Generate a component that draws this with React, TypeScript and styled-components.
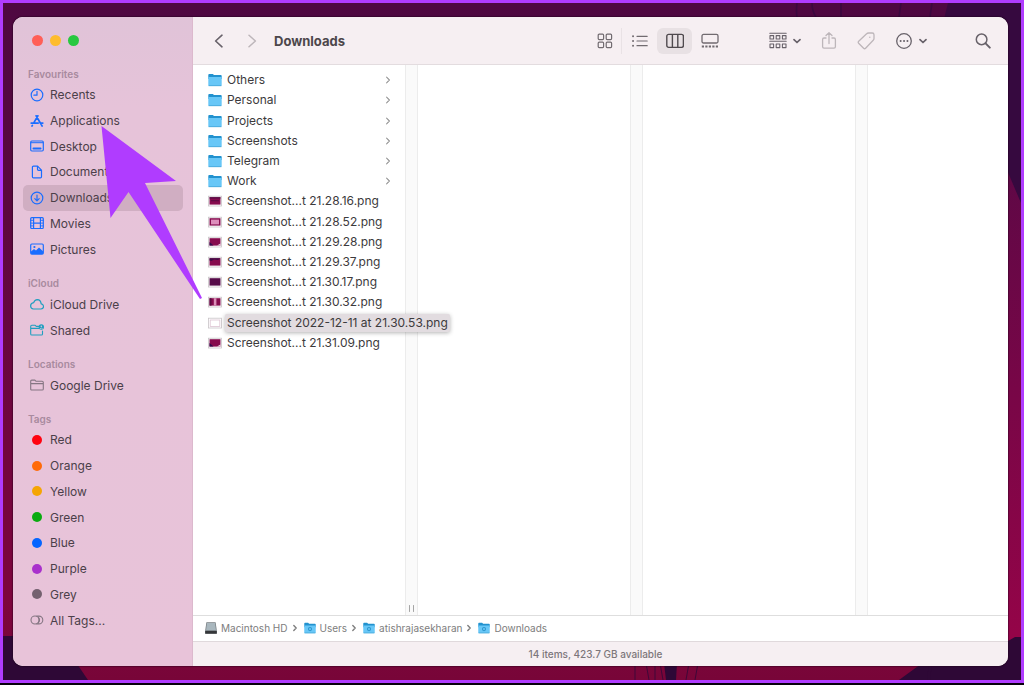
import React from "react";
import styled, { createGlobalStyle } from "styled-components";

const GlobalStyle = createGlobalStyle`
  *, *::before, *::after { box-sizing: border-box; }
  body {
    margin: 0;
    font-family: Inter, "Liberation Sans", sans-serif;
    font-size: 12px;
    color: #3c3a3c;
  }
  ul, ol { list-style: none; margin: 0; padding: 0; }
  a { color: inherit; text-decoration: none; }
  button { margin: 0; padding: 0; border: 0; background: none; color: inherit; font: inherit; }
  svg { display: block; flex: none; }
`;

const Screen = styled.div`
  display: flex;
  height: 100vh;
  min-height: 685px;
  padding-bottom: 2px;
  background: #07000d;
`;

const Desktop = styled.main`
  position: relative;
  display: flex;
  flex: 1;
  min-width: 0;
  padding: 14px 13px 14px 10px;
  border: 3px solid #b03cff;
  background: linear-gradient(180deg, #4e0841 0%, #5c083f 30%, #72063e 65%, #7e063e 88%, #780538 100%);
`;

const Wallpaper = styled.svg`
  position: absolute;
  inset: 0;
  width: 100%;
  height: 100%;
`;

const Window = styled.div`
  position: relative;
  display: flex;
  flex: 1;
  min-width: 0;
  border-radius: 10px;
  overflow: hidden;
  background: #fff;
  box-shadow: 0 0 1px 1px rgba(30, 0, 25, 0.4);
`;

const Sidebar = styled.nav`
  display: flex;
  flex-direction: column;
  flex: none;
  width: 180px;
  padding: 18px 9px 0 10px;
  border-right: 1px solid #dcb9cd;
  background: linear-gradient(180deg, #e0c3d8 0%, #e6c3d9 14%, #e8c3d9 100%);
`;

const Lights = styled.div`
  display: flex;
  gap: 7px;
  height: 31px;
  padding-left: 9px;
`;

const Light = styled.button<{ $color: string }>`
  width: 11px;
  height: 11px;
  border-radius: 50%;
  background: ${(p) => p.$color};
`;

const Section = styled.section`
  margin-bottom: 13px;
`;

const SectionTitle = styled.h2`
  margin: 0;
  padding-left: 5px;
  font-size: 10px;
  line-height: 16px;
  font-weight: 600;
  color: #a88a9e;
`;

const PlaceList = styled.ul<{ $height: number }>`
  display: grid;
  grid-auto-rows: 1fr;
  height: ${(p) => p.$height}px;
`;

const Place = styled.a<{ $active?: boolean; $tint: string }>`
  display: flex;
  align-items: center;
  gap: 6px;
  height: 100%;
  padding-left: 7px;
  border-radius: 5px;
  color: #4b4049;
  background: ${(p) => (p.$active ? "#d0aec2" : "transparent")};
  svg { color: ${(p) => p.$tint}; }
`;

const Dot = styled.span<{ $color: string }>`
  width: 10px;
  height: 10px;
  margin: 0 2px;
  border-radius: 50%;
  background: ${(p) => p.$color};
`;

const Content = styled.div`
  display: flex;
  flex-direction: column;
  flex: 1;
  min-width: 0;
`;

const Toolbar = styled.header`
  display: flex;
  align-items: center;
  flex: none;
  height: 48px;
  padding: 0 17px 0 17px;
  border-bottom: 1px solid #e3dcdf;
  background: #f6eff2;
  color: #68626a;
`;

const NavButtons = styled.div`
  display: flex;
  gap: 15px;
`;

const Title = styled.h1`
  flex: 1;
  margin: 0 0 0 13px;
  font-size: 13px;
  line-height: 20px;
  font-weight: 700;
  color: #4c474b;
`;

const ViewSwitch = styled.div`
  display: flex;
  margin-right: 42px;
`;

const ViewButton = styled.button<{ $active?: boolean; $divider?: boolean }>`
  display: grid;
  place-items: center;
  width: 35px;
  height: 26px;
  border-radius: ${(p) => (p.$divider ? 0 : 6)}px;
  box-shadow: ${(p) => (p.$divider ? "inset -1px 0 #e9e2e5" : "none")};
  background: ${(p) => (p.$active ? "#e8e1e4" : "transparent")};
  color: ${(p) => (p.$active ? "#4f4a4e" : "#716b70")};
`;

const Tools = styled.div`
  display: flex;
  align-items: center;
  gap: 20px;
  margin-right: 48px;
`;

const ToolButton = styled.button<{ $faded?: boolean }>`
  display: flex;
  align-items: center;
  gap: 6px;
  height: 26px;
  color: ${(p) => (p.$faded ? "#bdb6ba" : "#68626a")};
`;

const Browser = styled.div`
  display: flex;
  flex: 1;
  min-height: 0;
`;

const Column = styled.section<{ $fill?: boolean }>`
  flex: ${(p) => (p.$fill ? "1 1 0" : "none")};
  width: ${(p) => (p.$fill ? "auto" : "212px")};
  min-width: 0;
  padding-top: 5px;
`;

const Gutter = styled.div`
  display: flex;
  align-items: flex-end;
  justify-content: center;
  flex: none;
  width: 13px;
  padding-bottom: 3px;
  border: solid #ececec;
  border-width: 0 1px;
  background: #fafafa;
  color: #a5a5a5;
`;

const FileList = styled.ul`
  display: grid;
  grid-template-columns: 100%;
  grid-auto-rows: 1fr;
  height: 283px;
`;

const FileRow = styled.button`
  display: flex;
  align-items: center;
  width: 100%;
  height: 100%;
  padding: 0 14px 0 15px;
  text-align: left;
  white-space: nowrap;
`;

const FileName = styled.span<{ $expanded?: boolean }>`
  position: relative;
  z-index: 1;
  flex: 1 0 auto;
  margin-left: 3px;
  padding: 0 2px;
  line-height: 18px;
  border-radius: 2px;
  background: ${(p) => (p.$expanded ? "#e2dce0" : "transparent")};
  box-shadow: ${(p) => (p.$expanded ? "0 1px 4px rgba(0, 0, 0, 0.3)" : "none")};
`;

const PathBar = styled.nav`
  flex: none;
  height: 26px;
  padding: 0 0 1px 12px;
  border-top: 1px solid #dedede;
  color: #7d7d7d;
  ol { display: flex; height: 100%; }
  li { display: flex; align-items: center; }
`;

const Crumb = styled.a`
  display: flex;
  align-items: center;
  gap: 4px;
  font-size: 10px;
`;

const StatusBar = styled.footer`
  flex: none;
  height: 25px;
  padding-right: 10px;
  border-top: 1px solid #e0d9dc;
  background: #f6eff2;
  color: #7c767a;
  font-size: 10px;
  font-weight: 500;
  line-height: 24px;
  text-align: center;
`;

const Pointer = styled.svg`
  position: absolute;
  left: 98px;
  top: 123px;
  pointer-events: none;
`;

const BLUE = "#1a6dff";
const TEAL = "#1f9fc0";
const GREY = "#857683";

type GlyphProps = { w?: number; h?: number; sw?: number; children: React.ReactNode };

const Glyph = ({ w = 14, h = 14, sw = 1.2, children }: GlyphProps) => (
  <svg
    width={w}
    height={h}
    viewBox={`0 0 ${w} ${h}`}
    fill="none"
    stroke="currentColor"
    strokeWidth={sw}
    strokeLinecap="round"
    strokeLinejoin="round"
    aria-hidden="true"
  >
    {children}
  </svg>
);

const ClockIcon = () => (
  <Glyph><circle cx="7" cy="7" r="5.8" /><path d="M7 3.3V7.2H3.9" /></Glyph>
);
const AppsIcon = () => (
  <Glyph sw={1.7}>
    <path d="M6.1 1.8L10.9 10M7.9 1.8L3.9 8.6M1.2 9.1H8.2M11 9.1H12.8M2.4 11.4L2 12M11.6 11.2L12.1 12" />
  </Glyph>
);
const DesktopIcon = () => (
  <Glyph><rect x="0.7" y="2" width="12.6" height="10" rx="1.2" /><path d="M1 3.7H13" strokeWidth="1" /><path d="M3.4 9.5H10.6" strokeWidth="1.8" /></Glyph>
);
const DocumentIcon = () => (
  <Glyph><path d="M7.6 1.2H3.5Q2.4 1.2 2.4 2.3V11.7Q2.4 12.8 3.5 12.8H10.4Q11.5 12.8 11.5 11.7V5.2ZM7.5 1.4V4.3Q7.5 5.3 8.5 5.3H11.3" /></Glyph>
);
const DownloadIcon = () => (
  <Glyph><circle cx="7" cy="7" r="5.8" /><path d="M7 4V9.6M4.8 7.6L7 9.8L9.2 7.6" /></Glyph>
);
const MoviesIcon = () => (
  <Glyph>
    <rect x="0.7" y="1.7" width="12.6" height="10.8" rx="1" />
    <path d="M3.6 2V12.2M10.4 2V12.2M3.6 7.1H10.4" />
    <path d="M1 4.3H3.4M1 7.1H3.4M1 9.9H3.4M10.6 4.3H13M10.6 7.1H13M10.6 9.9H13" strokeWidth="0.9" />
  </Glyph>
);
const PicturesIcon = () => (
  <Glyph>
    <rect x="0.7" y="2" width="12.6" height="10.2" rx="1.2" />
    <path d="M1 9.6L4 7L6 8.6L9 5.4L13 9.2V11.4Q13 12 12.2 12H1.8Q1 12 1 11.4Z" fill="currentColor" stroke="none" />
    <circle cx="4.4" cy="5" r="1.1" fill="currentColor" stroke="none" />
  </Glyph>
);
const CloudIcon = () => (
  <Glyph><path d="M3.4 12H11Q13.6 11.6 13.5 9.3Q13.3 7.2 11.2 6.9Q10.7 2.7 7.3 2.6Q4.6 2.7 3.7 5.7Q0.7 6.1 0.6 9Q0.8 11.8 3.4 12Z" /></Glyph>
);
const SharedIcon = () => (
  <Glyph sw={1.1}>
    <path d="M8.6 3.4H6.3L5.2 2.3H1.8Q0.7 2.3 0.7 3.4V10.9Q0.7 12 1.8 12H11.4Q12.5 12 12.5 10.9V8M0.9 5.4H8.6" />
    <circle cx="11.3" cy="4" r="2.7" fill="currentColor" stroke="none" />
    <circle cx="11.3" cy="3.3" r="0.8" fill="#e8c3d9" stroke="none" />
    <path d="M10.2 5.5Q11.3 4.4 12.4 5.5" stroke="#e8c3d9" strokeWidth="0.7" />
  </Glyph>
);
const FolderLineIcon = () => (
  <Glyph sw={1.1}><path d="M0.7 10.9V3.2Q0.7 2.1 1.8 2.1H4.9L6.1 3.3H12.1Q13.3 3.3 13.3 4.4V10.9Q13.3 12 12.1 12H1.9Q0.7 12 0.7 10.9ZM0.9 5.6H13.1" /></Glyph>
);
const AllTagsIcon = () => (
  <Glyph sw={1.1}><circle cx="5" cy="7" r="4" /><path d="M6.8 3.1H8.9A3.9 3.9 0 0 1 8.9 10.9H6.8M8.4 4.4A4 4 0 0 1 8.4 9.6" /></Glyph>
);

const Down = () => <Glyph w={8} h={8} sw={1.7}><path d="M1 2.6L4 5.5L7 2.6" /></Glyph>;

const FolderIcon = ({ small, mark }: { small?: boolean; mark?: boolean }) => (
  <svg width={small ? 12 : 14} height={small ? 12 : 14} viewBox="0 0 14 14" aria-hidden="true">
    <path d="M0.3 2Q0.3 1 1.2 1H4.8L6 2.1H12.8Q13.7 2.1 13.7 3V6H0.3Z" fill="#2292cf" />
    <path d="M0.3 4H13.7V12Q13.7 13 12.8 13H1.2Q0.3 13 0.3 12Z" fill="#68c7f7" />
    <path d="M0.6 12.7H13.4" stroke="#45a5d8" strokeWidth="0.8" />
    {mark && <circle cx="7" cy="8.3" r="1.8" fill="none" stroke="#2c95cd" strokeWidth="1.2" />}
  </svg>
);

const DriveIcon = () => (
  <svg width="12" height="12" viewBox="0 0 12 12" aria-hidden="true">
    <path d="M1.4 0.3H10.6L11.8 8.5V11.5H0.2V8.5Z" fill="#777e82" />
    <path d="M2 1H10L11 8.2H1Z" fill="#a9b7be" />
    <path d="M0.2 9H11.8V11.7H0.2Z" fill="#35373a" />
  </svg>
);

type ThumbKind = "bar" | "panel" | "split" | "top" | "dark" | "stripe" | "blank";

const Thumb = ({ kind }: { kind: ThumbKind }) => (
  <svg width="14" height="14" viewBox="0 0 14 14" aria-hidden="true">
    <rect x="0.5" y="2.2" width="13" height="9.8" fill="#fff" stroke="#c9c4c7" strokeWidth="0.8" />
    {kind !== "blank" && <rect x="1.5" y="3.2" width="11" height="7.4" fill={kind === "dark" ? "#560b49" : "#860b4e"} />}
    {kind === "bar" && <path d="M1.5 3.2H12.5V4.4H1.5ZM3 6.2H11V7.2H3Z" fill="#530b42" />}
    {kind === "panel" && <rect x="3" y="4.6" width="8" height="4.8" fill="#dd8dbb" />}
    {kind === "split" && <><path d="M1.5 7L5.5 10.6H1.5Z" fill="#310b4c" /><path d="M9 10.6L12.5 8.6V10.6Z" fill="#f0dfe9" /></>}
    {kind === "top" && <path d="M1.5 3.2H12.5L10 5L6 4.6L3.5 6L1.5 5.4Z" fill="#400b46" />}
    {kind === "stripe" && <><rect x="5.8" y="3.2" width="2.6" height="7.4" fill="#dc8fb9" /><path d="M1.5 3.2H3.5V10.6H1.5Z" fill="#5c0b42" /></>}
    {kind === "blank" && <rect x="2.2" y="4" width="9.6" height="6.4" fill="#fff" stroke="#ddc4d2" strokeWidth="0.8" />}
  </svg>
);

type PlaceItem = { name: string; icon: React.ReactNode; tint?: string; active?: boolean };

const sections: { title: string; height: number; items: PlaceItem[] }[] = [
  {
    title: "Favourites",
    height: 180,
    items: [
      { name: "Recents", icon: <ClockIcon /> },
      { name: "Applications", icon: <AppsIcon /> },
      { name: "Desktop", icon: <DesktopIcon /> },
      { name: "Documents", icon: <DocumentIcon /> },
      { name: "Downloads", icon: <DownloadIcon />, active: true },
      { name: "Movies", icon: <MoviesIcon /> },
      { name: "Pictures", icon: <PicturesIcon /> },
    ],
  },
  {
    title: "iCloud",
    height: 52,
    items: [
      { name: "iCloud Drive", icon: <CloudIcon />, tint: TEAL },
      { name: "Shared", icon: <SharedIcon />, tint: TEAL },
    ],
  },
  { title: "Locations", height: 26, items: [{ name: "Google Drive", icon: <FolderLineIcon />, tint: GREY }] },
  {
    title: "Tags",
    height: 206,
    items: [
      { name: "Red", icon: <Dot $color="#ff0310" /> },
      { name: "Orange", icon: <Dot $color="#ff6a08" /> },
      { name: "Yellow", icon: <Dot $color="#f5a503" /> },
      { name: "Green", icon: <Dot $color="#0aab10" /> },
      { name: "Blue", icon: <Dot $color="#0565ff" /> },
      { name: "Purple", icon: <Dot $color="#a931cc" /> },
      { name: "Grey", icon: <Dot $color="#74616f" /> },
      { name: "All Tags...", icon: <AllTagsIcon />, tint: GREY },
    ],
  },
];

const folders = ["Others", "Personal", "Projects", "Screenshots", "Telegram", "Work"];

const files: { name: string; kind: ThumbKind; expanded?: boolean }[] = [
  { name: "Screenshot...t 21.28.16.png", kind: "bar" },
  { name: "Screenshot...t 21.28.52.png", kind: "panel" },
  { name: "Screenshot...t 21.29.28.png", kind: "split" },
  { name: "Screenshot...t 21.29.37.png", kind: "top" },
  { name: "Screenshot...t 21.30.17.png", kind: "dark" },
  { name: "Screenshot...t 21.30.32.png", kind: "stripe" },
  { name: "Screenshot 2022-12-11 at 21.30.53.png", kind: "blank", expanded: true },
  { name: "Screenshot...t 21.31.09.png", kind: "split" },
];

const path = ["Macintosh HD", "Users", "atishrajasekharan", "Downloads"];

export default function App() {
  return (
    <>
      <GlobalStyle />
      <Screen>
        <Desktop>
          <Wallpaper viewBox="0 0 1018 677" preserveAspectRatio="none" aria-hidden="true">
            <defs>
              <linearGradient id="glow" x1="0" y1="0" x2="0" y2="1">
                <stop offset="0" stopColor="#5d0846" />
                <stop offset="1" stopColor="#950448" />
              </linearGradient>
            </defs>
            <path d="M1000 150H1018V640H1000Z" fill="url(#glow)" />
            <path d="M945 0H1018V200L1004 167L990 130L940 20Z" fill="#36093f" />
            <path d="M0 633H55L85 677H0Z" fill="#2e0836" />
            <path d="M896 677L940 645L1005 638L1012 634H1018V677Z" fill="#2e0836" />
            <path d="M794 0Q793 8 794 14M809 0Q809 8 813 14M838 0V14M898 0L896 14M929 0L927 14" stroke="#3a093f" strokeWidth="1.6" fill="none" />
            <path d="M661 660H674L673 677H663Z M926 660H929L927 677H924Z" fill="#2e0836" />
            <path d="M632 660V677M643 660L646 677M652 660V677M657 660L660 677M686 660L683 677M695 660L692 677" stroke="#3f0838" fill="none" />
          </Wallpaper>
          <Window>
            <Sidebar aria-label="Sidebar">
              <Lights>
                <Light $color="#ff5f57" aria-label="Close" />
                <Light $color="#febc2e" aria-label="Minimise" />
                <Light $color="#28c840" aria-label="Zoom" />
              </Lights>
              {sections.map((s) => (
                <Section key={s.title}>
                  <SectionTitle>{s.title}</SectionTitle>
                  <PlaceList $height={s.height}>
                    {s.items.map((item) => (
                      <li key={item.name}>
                        <Place href="#" $tint={item.tint ?? BLUE} $active={item.active}>
                          {item.icon}
                          {item.name}
                        </Place>
                      </li>
                    ))}
                  </PlaceList>
                </Section>
              ))}
            </Sidebar>
            <Content>
              <Toolbar>
                <NavButtons>
                  <ToolButton aria-label="Back">
                    <Glyph w={18} h={18} sw={1.6}><path d="M12 3.2L5.6 9L12 14.8" /></Glyph>
                  </ToolButton>
                  <ToolButton aria-label="Forward" $faded>
                    <Glyph w={18} h={18} sw={1.5}><path d="M6 3.2L12.4 9L6 14.8" /></Glyph>
                  </ToolButton>
                </NavButtons>
                <Title>Downloads</Title>
                <ViewSwitch role="group" aria-label="View">
                  <ViewButton aria-label="Icons" $divider>
                    <Glyph w={16} h={16}>
                      <rect x="1.2" y="1.2" width="5.4" height="5.4" rx="1" /><rect x="9.2" y="1.2" width="5.4" height="5.4" rx="1" />
                      <rect x="1.2" y="9.2" width="5.4" height="5.4" rx="1" /><rect x="9.2" y="9.2" width="5.4" height="5.4" rx="1" />
                    </Glyph>
                  </ViewButton>
                  <ViewButton aria-label="List">
                    <Glyph w={16} h={16}>
                      <path d="M5 3.3H15.2M5 8H15.2M5 12.7H15.2" />
                      <path d="M1 3.3H1.1M1 8H1.1M1 12.7H1.1" strokeWidth="1.9" />
                    </Glyph>
                  </ViewButton>
                  <ViewButton aria-label="Columns" aria-pressed="true" $active>
                    <Glyph w={18} h={16} sw={1.4}><rect x="0.8" y="1.4" width="16.6" height="13" rx="1.8" /><path d="M6.4 1.6V14.2M11.8 1.6V14.2" /></Glyph>
                  </ViewButton>
                  <ViewButton aria-label="Gallery">
                    <Glyph w={18} h={16} sw={1.3}>
                      <rect x="1" y="1.4" width="16" height="8.6" rx="1.5" />
                      <path d="M0.8 13.5H17.2" strokeWidth="2.2" strokeDasharray="2.2 1.3" strokeLinecap="butt" />
                    </Glyph>
                  </ViewButton>
                </ViewSwitch>
                <Tools>
                  <ToolButton aria-label="Group">
                    <Glyph w={18} h={18} sw={1.1}>
                      <path d="M0.8 1.2H17.2M0.8 9.2H17.2" />
                      <path d="M1 3.6H4.6V7H1ZM7.2 3.6H10.8V7H7.2ZM13.4 3.6H17V7H13.4ZM1 12H4.6V15.6H1ZM7.2 12H10.8V15.6H7.2ZM13.4 12H17V15.6H13.4Z" />
                    </Glyph>
                    <Down />
                  </ToolButton>
                  <ToolButton aria-label="Share" $faded>
                    <Glyph w={16} h={20} sw={1.3}><path d="M5 7H3Q1.6 7 1.6 8.4V15.8Q1.6 17.2 3 17.2H13Q14.4 17.2 14.4 15.8V8.4Q14.4 7 13 7H11M8 12.5V1.8M5 4.5L8 1.6L11 4.5" /></Glyph>
                  </ToolButton>
                  <ToolButton aria-label="Tags" $faded>
                    <Glyph w={18} h={18} sw={1.3}>
                      <path d="M9.6 1.8Q10.4 1 11.6 1H15.2Q17 1 17 2.8V6.4Q17 7.5 16.2 8.3L8.6 16.2Q7.6 17.2 6.6 16.2L1.6 11.2Q0.8 10.2 1.7 9.3Z" />
                      <circle cx="12.8" cy="5.2" r="0.7" fill="currentColor" stroke="none" />
                    </Glyph>
                  </ToolButton>
                  <ToolButton aria-label="More actions">
                    <Glyph w={18} h={18} sw={1.3}>
                      <circle cx="9" cy="9" r="7.3" />
                      <path d="M5.6 9H5.7M9 9H9.1M12.4 9H12.5" strokeWidth="1.9" />
                    </Glyph>
                    <Down />
                  </ToolButton>
                </Tools>
                <ToolButton aria-label="Search">
                  <Glyph w={16} h={16} sw={1.5}><circle cx="6.6" cy="6.4" r="5.3" /><path d="M10.6 10.4L14.8 14.6" strokeWidth="2" /></Glyph>
                </ToolButton>
              </Toolbar>
              <Browser>
                <Column aria-label="Downloads">
                  <FileList>
                    {folders.map((name) => (
                      <li key={name}>
                        <FileRow>
                          <FolderIcon />
                          <FileName>{name}</FileName>
                          <Glyph w={6} h={8} sw={1.1}><path d="M1.6 1.2L4.4 4L1.6 6.8" stroke="#959595" /></Glyph>
                        </FileRow>
                      </li>
                    ))}
                    {files.map((f) => (
                      <li key={f.name}>
                        <FileRow>
                          <Thumb kind={f.kind} />
                          <FileName $expanded={f.expanded}>{f.name}</FileName>
                        </FileRow>
                      </li>
                    ))}
                  </FileList>
                </Column>
                <Gutter><Glyph w={6} h={7} sw={1}><path d="M0.5 0.5V6.5M4.5 0.5V6.5" /></Glyph></Gutter>
                <Column />
                <Gutter />
                <Column />
                <Gutter />
                <Column $fill />
              </Browser>
              <PathBar aria-label="Path">
                <ol>
                  {path.map((name, i) => (
                    <li key={name}>
                      <Crumb href="#">
                        {i === 0 ? <DriveIcon /> : <FolderIcon small mark />}
                        {name}
                      </Crumb>
                      {i < path.length - 1 && (
                        <Glyph w={16} h={8} sw={1.4}><path d="M5.8 1.6L8.2 4L5.8 6.4" /></Glyph>
                      )}
                    </li>
                  ))}
                </ol>
              </PathBar>
              <StatusBar>14 items, 423.7 GB available</StatusBar>
            </Content>
          </Window>
          <Pointer width="104" height="174" viewBox="0 0 104 174" aria-hidden="true">
            <path d="M0.5 0L75 55L44 57L101 172L99 173L27.5 66L9.5 92Z" fill="#b03cff" />
          </Pointer>
        </Desktop>
      </Screen>
    </>
  );
}
